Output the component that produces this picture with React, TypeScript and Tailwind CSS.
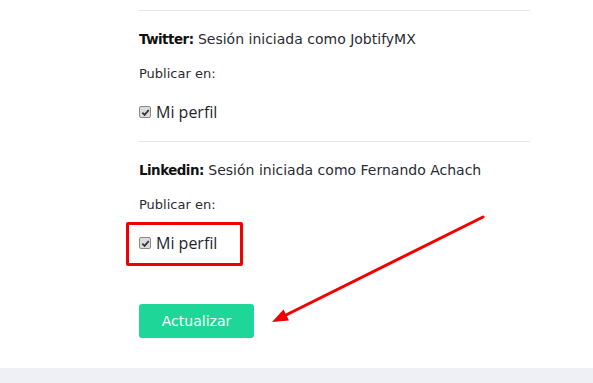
import React from 'react';

const accounts = [
  { network: 'Twitter', user: 'JobtifyMX', highlight: false },
  { network: 'Linkedin', user: 'Fernando Achach', highlight: true },
];

function CheckMark() {
  return (
    <span className="w-[12px] h-[12px] rounded-[2px] border border-[#8a8a8a] bg-[#dcdcdc] flex items-center justify-center">
      <svg width="9" height="9" viewBox="0 0 10 10">
        <path d="M1.5 5.2 L4 7.6 L8.6 2.2" fill="none" stroke="#333" strokeWidth="2" />
      </svg>
    </span>
  );
}

function Account({ network, user, highlight }: { network: string; user: string; highlight: boolean }) {
  return (
    <div className="border-t border-[#e6e6e6] pt-[18px] pb-[17px]">
      <p className="h-5 leading-5 text-[14px] text-[#2b2b33]">
        <span className="font-bold text-[13.4px] tracking-[-0.5px] text-[#111]">{network}:</span> Sesión iniciada como {user}
      </p>
      <p className="mt-[15px] h-5 leading-5 text-[13px] text-[#2b2b33]">Publicar en:</p>
      <div className="relative mt-4 h-6 flex items-center">
        {/* red annotation box */}
        {highlight && (
          <div className="absolute left-[-13px] top-[-9px] w-[117px] h-[44px] border-[3px] border-[#f00000] rounded-[2px]" />
        )}
        <label className="flex items-center gap-[5px] text-[16px] text-[#1f1f2e]" style={{ fontFamily: "'Open Sans', sans-serif" }}>
          <CheckMark />
          Mi perfil
        </label>
      </div>
    </div>
  );
}

export default function App() {
  return (
    <div
      className="relative w-[593px] h-[383px] bg-white flex flex-col overflow-hidden"
      style={{ fontFamily: "'DejaVu Sans', sans-serif" }}
    >
      <div className="flex-1 pt-[10px] pl-[139px] pr-[63px]">
        {accounts.map((a) => (
          <Account key={a.network} {...a} />
        ))}
        <button className="mt-[32px] w-[115px] h-[34px] rounded-[3px] bg-[#1dd698] text-white text-[14px]">
          Actualizar
        </button>
      </div>
      <div className="h-[15px] bg-[#eff0f5]" />

      {/* annotation arrow */}
      <svg className="absolute inset-0 pointer-events-none" width="593" height="383">
        <line x1="483" y1="217" x2="284" y2="316" stroke="#f00000" strokeWidth="3" strokeLinecap="round" />
        <polygon points="272,322 289,320.5 283.5,309.5" fill="#f00000" />
      </svg>
    </div>
  );
}
